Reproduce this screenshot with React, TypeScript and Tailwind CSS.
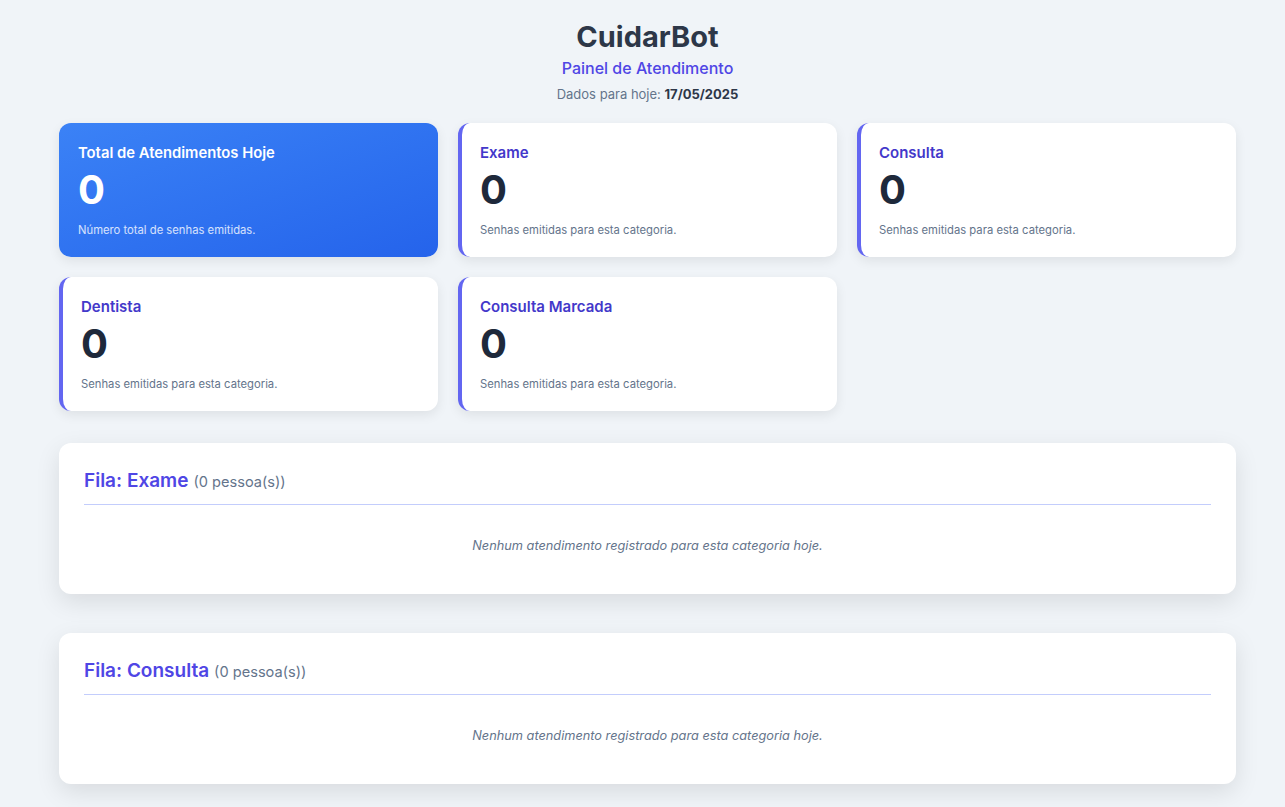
import React from "react";

const font = { fontFamily: "Inter, 'Noto Sans', sans-serif" };

function StatCard({ title }: { title: string }) {
  return (
    <div className="h-[134px] rounded-xl bg-white border-l-4 border-[#6366f1] shadow-[0_4px_12px_rgba(0,0,0,0.08)] pl-[18px] pt-[19px]">
      <div className="text-[15px] leading-[22px] font-semibold text-[#4338ca]">{title}</div>
      <div className="mt-[6px] text-[40px] leading-[40px] font-bold text-[#1e293b]">0</div>
      <div className="mt-[12px] text-[11.25px] leading-4 text-[#64748b]">Senhas emitidas para esta categoria.</div>
    </div>
  );
}

function Queue({ name }: { name: string }) {
  return (
    <div className="rounded-xl bg-white shadow-[0_8px_24px_rgba(0,0,0,0.10)] px-[25px] pt-6 pb-[38px]">
      <div className="pb-[9px] border-b border-[#c3cdfc] flex items-baseline">
        <span className="text-[19px] leading-7 font-semibold text-[#4f46e5]">Fila: {name}</span>
        <span className="ml-[5px] text-[14.6px] text-[#64748b]">(0 pessoa(s))</span>
      </div>
      <div className="mt-[31px] text-center italic text-[12.75px] leading-5 text-[#64748b]">
        Nenhum atendimento registrado para esta categoria hoje.
      </div>
    </div>
  );
}

export default function App() {
  return (
    <div style={font} className="min-h-[807px] bg-[#f0f4f8] pl-[59px] pr-[49px] pt-[18px] pb-6">
      <div className="flex flex-col items-center">
        <h1 className="text-[29px] leading-[38px] font-bold text-[#2d3748]">CuidarBot</h1>
        <div className="text-[16px] leading-6 font-medium text-[#4f46e5]">Painel de Atendimento</div>
        <div className="mt-[4px] text-[13px] leading-5 text-[#64748b]">
          Dados para hoje: <span className="font-bold text-[#2d3748]">17/05/2025</span>
        </div>
      </div>

      <div className="mt-[19px] grid grid-cols-3 gap-5">
        <div className="h-[134px] rounded-xl bg-gradient-to-br from-[#3b82f6] to-[#2563eb] shadow-[0_4px_12px_rgba(0,0,0,0.08)] pl-[19px] pt-[19px] text-white">
          <div className="text-[14.8px] leading-[22px] font-semibold">Total de Atendimentos Hoje</div>
          <div className="mt-[6px] text-[40px] leading-[40px] font-bold">0</div>
          <div className="mt-[12px] text-[11.25px] leading-4 text-white/80">Número total de senhas emitidas.</div>
        </div>
        <StatCard title="Exame" />
        <StatCard title="Consulta" />
        <StatCard title="Dentista" />
        <StatCard title="Consulta Marcada" />
      </div>

      <div className="mt-8 flex flex-col gap-[39px]">
        <Queue name="Exame" />
        <Queue name="Consulta" />
      </div>
    </div>
  );
}
